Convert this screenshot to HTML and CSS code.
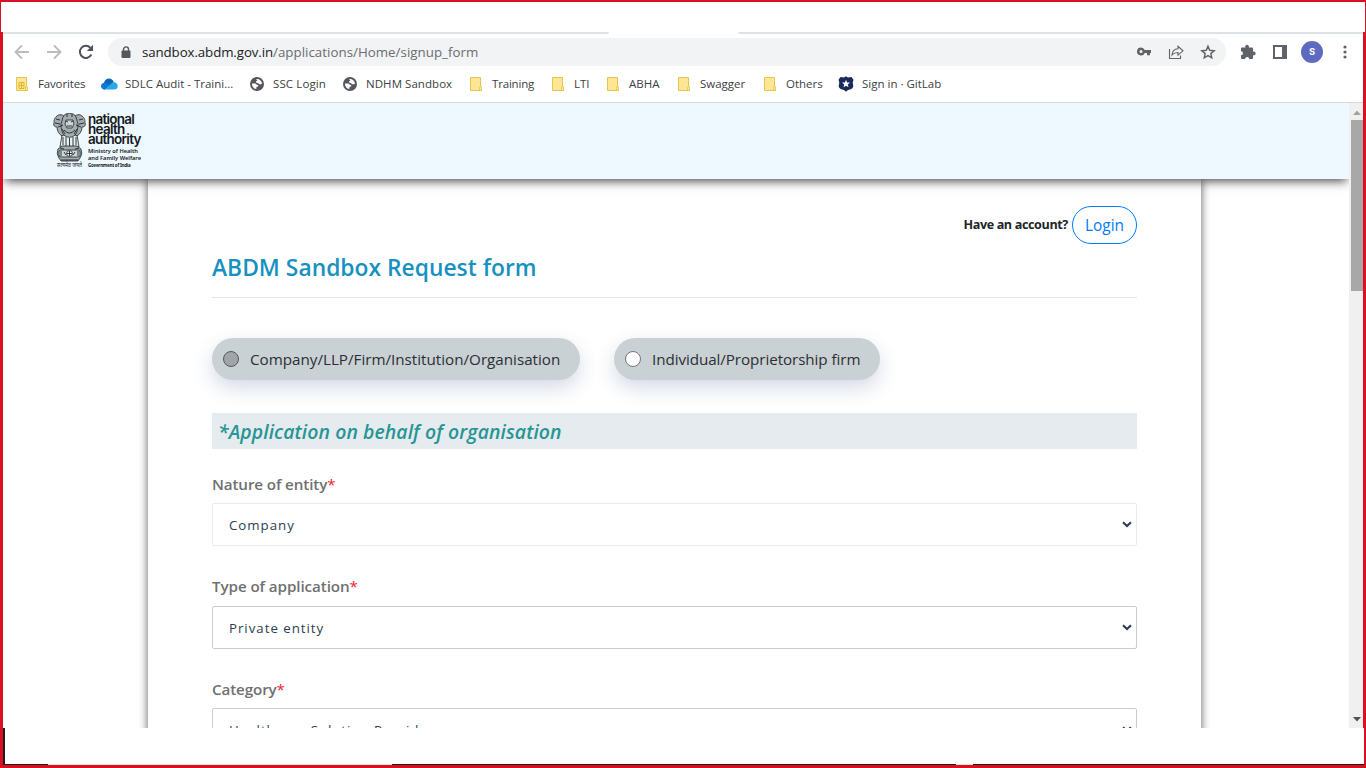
FILE: index.html
```html
<!DOCTYPE html>
<html lang="en">
<head>
<meta charset="utf-8">
<title>ABDM Sandbox Request form</title>
<link rel="stylesheet" href="styles.css">
</head>
<body>
<svg width="0" height="0" class="defs">
  <symbol id="folder" viewBox="0 0 14 16"><path d="M1.500 1.500h10v9.500h1v3.500h-11z" fill="#ffe694" stroke="#e9c64b"/><path d="M10.500 14v-3h2v3z" fill="#fff0b8" stroke="#e9c64b" stroke-width=".8"/></symbol>
  <symbol id="globe" viewBox="0 0 14 14"><circle cx="7" cy="7" r="7" fill="#54575c"/><path d="M2 6.500h3.200c1 0 1.200 1.500 2.500 1.500.8 0 1 1.400 0 1.600-1.400.2-1.300.9-1.400 2.500C3.600 11.600 1.800 9.500 2 6.500zM6 2c2.500-.6 5.700 1 6.100 4.500-1 .8-1.500.8-2.300.8-1.300 0-1-1.400-2.400-1.400-1 0-1.700-.4-1.400-1.300.2-.6 1.200-.3 1.200-1C7.200 2.800 6.400 2.700 6 2z" fill="#fff"/></symbol>
  <symbol id="chev" viewBox="0 0 10 7"><path d="M1 1.200 5 5.100 9 1.200" fill="none" stroke="#2c3e50" stroke-width="2.100"/></symbol>
</svg>
<div class="screen">
  <div class="top-strip"></div>
  <div class="window">
    <div class="tab-edge"><i class="edge-left"></i><i class="edge-right"></i></div>
    <div class="toolbar">
      <div class="nav">
        <svg width="16" height="16" viewBox="0 0 16 16" fill="none" stroke="#babcbe" stroke-width="1.900"><path d="M15 8H2M8 1.300 1.500 8 8 14.700"/></svg>
        <svg width="16" height="16" viewBox="0 0 16 16" fill="none" stroke="#babcbe" stroke-width="1.900"><path d="M1 8h13M8 1.300 14.500 8 8 14.700"/></svg>
        <svg width="16" height="16" viewBox="0 0 16 16"><path d="M13.300 10.500a6 6 0 1 1-.9-6.600" fill="none" stroke="#505357" stroke-width="2"/><path d="M15 .800V7H8.800z" fill="#505357"/></svg>
      </div>
      <div class="address">
        <svg class="lock" width="10" height="13" viewBox="0 0 10 13"><path d="M2.500 5V3.400a2.500 2.500 0 0 1 5 0V5" fill="none" stroke="#54575c" stroke-width="1.400"/><rect x=".5" y="4.600" width="9" height="7.400" rx="1" fill="#54575c"/></svg>
        <span class="url"><b>sandbox.abdm.gov.in</b>/applications/Home/signup_form</span>
        <div class="address-tools">
          <svg width="16" height="16" viewBox="0 0 16 16"><path d="M5 3.500a4 4 0 1 0 3.700 5.500H11v2.200h3V9h1V6H8.700A4 4 0 0 0 5 3.500zm0 2.600a1.500 1.500 0 1 1 0 3 1.500 1.500 0 0 1 0-3z" fill="#5f6368"/></svg>
          <svg width="16" height="16" viewBox="0 0 16 16" fill="none" stroke="#5f6368" stroke-width="1.100"><path d="M1.500 5v9.500h11V11.500M4 11c.4-4 2.700-6 6-6.200V2.300L15 6.800l-5 4.300V8.500c-2.600 0-4.400.6-6 2.500z"/></svg>
          <svg width="16" height="16" viewBox="0 0 16 16"><path d="m8 2.200 1.700 4.100 4.500.4-3.400 2.900 1 4.300L8 11.600l-3.800 2.300 1-4.300-3.400-2.900 4.500-.4z" fill="none" stroke="#5f6368" stroke-width="1.400"/></svg>
        </div>
      </div>
      <div class="extensions">
        <svg width="16" height="16" viewBox="0 0 16 16"><path d="M1 5.300V4.500q0-1 1-1h3.300a1.900 1.900 0 1 1 3.500 0H12q1 0 1 1v3.200a1.900 1.900 0 1 1 0 3.500V14q0 1-1 1H9.300a2.100 2.100 0 0 0-4.200 0H2q-1 0-1-1v-2.800a2 2 0 0 0 0-4z" fill="#5f6368"/></svg>
        <svg width="14" height="14" viewBox="0 0 14 14"><path d="M0 0h14v14H0zM2 2v10h7V2z" fill="#5f6368" fill-rule="evenodd"/></svg>
        <span class="avatar">s</span>
        <svg width="4" height="14" viewBox="0 0 4 14" fill="#5f6368"><circle cx="2" cy="2" r="1.600"/><circle cx="2" cy="7" r="1.600"/><circle cx="2" cy="12" r="1.600"/></svg>
      </div>
    </div>
    <div class="bookmarks">
      <div class="bm"><svg class="bi" width="14" height="16"><use href="#folder"/><path d="M4 6.500h5v6H4zM4 9.500h5M6.500 6.500v6" fill="none" stroke="#dfb52b"/></svg>Favorites</div>
      <div class="bm"><svg class="bi" width="17" height="12" viewBox="0 0 17 12"><path d="M4 11.500C-1 11-.8 5.500 3 4.700 4.500-.8 11.200-.6 12.800 4z" fill="#0b67b8"/><path d="M4 11.500C0 11-1 6.800 2.600 5.200c2-.9 4 .3 6.400 1.800z" fill="#0f78d4"/><path d="M4 11.500 9 7c2-1.800 3.500-3.300 5-2.400 3.500.8 3.800 6.600 0 6.900z" fill="#28a8ea"/></svg>SDLC Audit - Traini...</div>
      <div class="bm"><svg class="bi" width="14" height="14"><use href="#globe"/></svg>SSC Login</div>
      <div class="bm"><svg class="bi" width="14" height="14"><use href="#globe"/></svg>NDHM Sandbox</div>
      <div class="bm"><svg class="bi" width="14" height="16"><use href="#folder"/></svg>Training</div>
      <div class="bm"><svg class="bi" width="14" height="16"><use href="#folder"/></svg>LTI</div>
      <div class="bm"><svg class="bi" width="14" height="16"><use href="#folder"/></svg>ABHA</div>
      <div class="bm"><svg class="bi" width="14" height="16"><use href="#folder"/></svg>Swagger</div>
      <div class="bm"><svg class="bi" width="14" height="16"><use href="#folder"/></svg>Others</div>
      <div class="bm"><svg class="bi" width="16" height="16" viewBox="0 0 16 16"><path d="M8 .3 10 1.600l3.500-.6 2 2.800-.8 2.700.6 3.500c0 2.500-2.800 3.500-5.300 4L8 15.700 6 14c-2.500-.5-5.300-1.500-5.300-4l.6-3.500-.8-2.700 2-2.800 3.500.6z" fill="#1b2a5b"/><path d="m8 3.700 1.100 2.700 2.900.2-2.200 1.900.7 2.800L8 9.800l-2.500 1.500.7-2.800L4 6.600l2.900-.2z" fill="#fff"/></svg>Sign in · GitLab</div>
    </div>
    <div class="viewport">
      <div class="page">
        <header class="site-header">
          <svg class="emblem" width="33" height="56" viewBox="0 0 33 56">
            <g fill="#a3adb1" stroke="#202426" stroke-width=".8">
              <path d="M9 22 7 34h19l-2-12z" fill="#e5f0f5"/>
              <path d="M4 3C1 5 1 8 1 10c-1 3 1 4 3 4 0 4 2 7 5 9l4-3V5C10 1 6 1 4 3zM29 3c3 2 3 5 3 7 1 3-1 4-3 4 0 4-2 7-5 9l-4-3V5c3-4 7-4 9-2z"/>
              <path d="M10 4c2-5 11-5 13 0l2 7c0 5-1 9-3 11-3 3-8 3-11 0-2-2-3-6-3-11z"/>
              <path d="M13 7h7l1 4-2 4h-5l-2-4z" fill="#cbd4d8"/>
              <path d="M9 33h15l4 3q2 5-1 9l-2 3H8l-2-3q-3-4-1-9z"/>
              <rect x="6" y="37" width="21" height="7" rx="2" fill="#cdd7db"/>
              <circle cx="16.500" cy="40.500" r="3" fill="#eaf4f8"/>
            </g>
            <g fill="none" stroke="#202426" stroke-width=".9">
              <path d="M10 24v8M13 24v9M16.500 25v8M20 24v9M23 24v8M3 6l4 1M2 10l5 1M30 6l-4 1M31 10l-5 1M5 14l5-2M28 14l-5-2M13 8l2 1M20 8l-2 1M14 13h5M11 17c4 4 7 4 11 0M9 16l3 5M24 16l-3 5M14 1v3M19 1v3M8 38v5M11 39l2 3M22 39l-2 3M25 38v5M16.500 38v5M14 40.500h5M7 35l4 1M26 35l-4 1M8 47h17"/>
            </g>
            <text x="4" y="54" textLength="25" lengthAdjust="spacingAndGlyphs" class="motto">सत्यमेव जयते</text>
          </svg>
          <div class="brand">
            <span class="brand-name">national<br>health<br>authority</span>
            <span class="brand-dept">Ministry of Health<br>and Family Welfare</span>
            <span class="brand-gov">Government of India</span>
          </div>
        </header>
        <main class="card">
          <div class="account"><span class="have">Have an account?</span><a class="login">Login</a></div>
          <h1 class="title">ABDM Sandbox Request form</h1>
          <div class="choices">
            <label class="choice"><span class="dot dot-on"></span>Company/LLP/Firm/Institution/Organisation</label>
            <label class="choice individual"><span class="dot"></span>Individual/Proprietorship firm</label>
          </div>
          <h2 class="band">*Application on behalf of organisation</h2>
          <div class="field"><div class="label">Nature of entity<em>*</em></div><div class="select pale">Company<svg width="10" height="7"><use href="#chev"/></svg></div></div>
          <div class="field second"><div class="label">Type of application<em>*</em></div><div class="select">Private entity<svg width="10" height="7"><use href="#chev"/></svg></div></div>
          <div class="field"><div class="label">Category<em>*</em></div><div class="select">Healthcare Solution Provider<svg width="10" height="7"><use href="#chev"/></svg></div></div>
        </main>
      </div>
      <div class="scrollbar">
        <svg width="8" height="5" viewBox="0 0 8 5"><path d="M0 5 4 .500 8 5z" fill="#a3a3a3"/></svg>
        <div class="thumb"></div>
        <svg class="down" width="8" height="5" viewBox="0 0 8 5"><path d="M0 0 4 4.500 8 0z" fill="#505050"/></svg>
      </div>
    </div>
  </div>
  <div class="bottom-strip"><i></i><i></i><i></i></div>
</div>
</body>
</html>
```

FILE: styles.css
```css
* { box-sizing: border-box; }
body { margin: 0; font-family: "Open Sans", "Noto Sans", sans-serif; background: #fff; }
.defs { position: absolute; }
.screen { width: 1366px; height: 768px; overflow: hidden; display: flex; flex-direction: column; background: #fff; border-bottom: 3px solid #d91022; }
.top-strip { height: 32px; flex: none; border: solid #d91022; border-width: 2px 1px 0; }
.window { height: 696px; flex: none; border: solid #d91022; border-width: 0 3px; display: flex; flex-direction: column; }
.tab-edge { height: 2px; display: flex; justify-content: space-between; }
.tab-edge i { background: #dee1e6; }
.edge-left { width: 606px; border-bottom-right-radius: 3px; }
.edge-right { width: 625px; border-bottom-left-radius: 3px; }

.toolbar { height: 36px; display: flex; align-items: center; }
.nav { width: 105px; padding-left: 11px; display: flex; gap: 16px; }
.address { width: 1118px; height: 28px; border-radius: 14px; background: #f1f3f4; display: flex; align-items: center; padding: 0 10px 0 13px; }
.lock { margin-right: 11px; }
.url { font-size: 13.3px; color: #6a6d71; letter-spacing: .03px; }
.url b { font-weight: 400; color: #202124; letter-spacing: -.1px; }
.address-tools { margin-left: auto; display: flex; gap: 16px; }
.extensions { flex: 1; display: flex; align-items: center; padding-left: 14px; }
.extensions svg:nth-child(2) { margin-left: 17px; }
.avatar { width: 22px; height: 22px; border-radius: 50%; background: #5c6bc0; color: #fff; font: 500 12px/21px Roboto, sans-serif; text-align: center; margin: 0 20px 0 14px; }

.bookmarks { height: 33px; border-bottom: 1px solid #d8dadf; display: grid; grid-template-columns: 87px 148px 93px 126px 82px 55px 71px 86px 75px 1fr; padding-left: 12px; font-size: 11.5px; color: #3c4043; white-space: nowrap; }
.bm { height: 32px; display: flex; align-items: center; padding-bottom: 5px; }
.bm .bi { margin-right: 9px; flex: none; overflow: visible; }
.bm:nth-child(1) { letter-spacing: -.15px; }
.bm:nth-child(2) .bi { margin: 0 7px 0 -1px; }
.bm:nth-child(3) { letter-spacing: .12px; }
.bm:nth-child(4) { letter-spacing: .05px; }
.bm:nth-child(5) { letter-spacing: -.18px; }
.bm:nth-child(10) .bi { margin-right: 8px; }

.viewport { flex: 1; min-height: 0; display: flex; }
.page { width: 1346px; overflow: hidden; display: flex; flex-direction: column; align-items: center; }
.site-header { position: relative; z-index: 1; width: 100%; height: 76px; flex: none; background: #edf8ff; box-shadow: 0 4px 10px -2px #444; display: flex; padding: 10px 0 0 50px; }
.motto { font: 6px "Noto Sans", sans-serif; fill: #202426; }
.brand { margin-left: 2px; padding-top: 1px; color: #17191b; display: flex; flex-direction: column; }
.brand-name { font: 600 13.5px/10px Inter, sans-serif; letter-spacing: -.74px; }
.brand-dept { font: 600 5.7px/7px "Noto Sans", sans-serif; margin-top: 4px; }
.brand-gov { font: 700 4.5px/6px "Noto Sans", sans-serif; letter-spacing: -.22px; }

.card { width: 1053px; height: 700px; flex: none; padding: 27px 64px 0; margin-left: -3px; background: #fff; box-shadow: 0 0 8px 1px #777; }
.account { height: 38px; display: flex; justify-content: flex-end; align-items: center; }
.have { font-size: 12.6px; font-weight: 700; color: #212529; letter-spacing: -.38px; margin: -2px 4px 0 0; }
.login { width: 65px; height: 38px; border: 1px solid #007bff; border-radius: 19px; color: #007bff; font-size: 15.4px; line-height: 37px; text-align: center; }
.title { margin: 6px 0 40px; height: 48px; border-bottom: 1px solid #e5e5e5; font-size: 22.8px; font-weight: 600; line-height: 36px; letter-spacing: .02px; color: #1791bf; }
.choices { display: flex; gap: 34px; }
.choice { width: 368px; height: 42px; border-radius: 21px; background: #c9d1d4; box-shadow: 0 8px 20px rgba(45, 70, 130, .2); display: flex; align-items: center; padding: 0 0 1px 11px; font-size: 15.2px; color: #2b2f33; white-space: nowrap; }
.individual { width: 266px; letter-spacing: -.07px; }
.dot { width: 16px; height: 16px; border: 1px solid #767676; border-radius: 50%; background: #fff; margin: 1px 11px 0 0; }
.dot-on { border-color: #55595c; background: #9fa5a8; }
.band { margin: 33px 0 0; height: 36px; background: #e6ebef; padding-left: 6px; font-size: 19.4px; font-style: italic; font-weight: 600; line-height: 37px; letter-spacing: .09px; color: #269594; }
.field { padding-top: 24px; height: 103px; }
.second { height: 102px; }
.label { height: 30px; font-size: 15.2px; font-weight: 600; line-height: 22px; letter-spacing: -.12px; color: #6f7072; }
.second .label { line-height: 20px; letter-spacing: -.09px; }
.label em { font-style: normal; font-weight: 400; color: #f21c2c; }
.select { height: 43px; border: 1px solid #ccc; border-radius: 2px; display: flex; align-items: center; justify-content: space-between; padding: 1px 4px 0 16px; font-size: 13.3px; letter-spacing: .97px; color: #2c3e50; }
.pale { border-color: #ebebeb; }
.select svg { margin-top: -2px; }
.second .select svg { margin-top: -1px; }

.scrollbar { width: 14px; background: #f0f0f0; padding: 7px 0 6px 2px; display: flex; flex-direction: column; align-items: center; }
.thumb { width: 12px; height: 171px; margin-top: 5px; background: #a8a8a8; }
.down { margin-top: auto; }

.bottom-strip { flex: 1; border: solid #d91022; border-width: 0 2px 0 3px; display: flex; align-items: flex-end; background: linear-gradient(#1c1c1c, #1c1c1c) 0 0 / 2px 100% no-repeat, linear-gradient(#e4e4e4, #e4e4e4) 0 100% / 100% 1px no-repeat; }
.bottom-strip i { height: 1px; background: #1c1c24; }
.bottom-strip i:nth-child(1) { width: 45px; }
.bottom-strip i:nth-child(2) { width: 564px; margin-left: 344px; }
.bottom-strip i:nth-child(3) { width: 391px; margin-left: 17px; }
```
